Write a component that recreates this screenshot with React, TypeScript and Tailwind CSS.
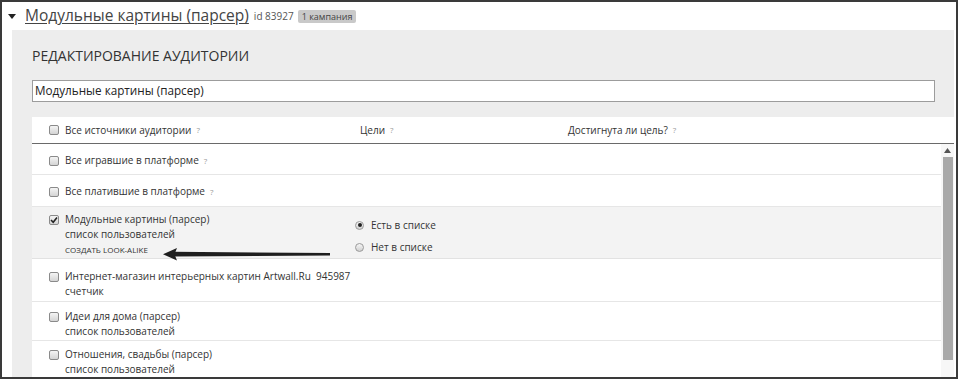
import React from "react";

const Q = () => <span className="ml-[5px] text-[8px] text-[#999]">?</span>;

const Box = ({ checked = false }: { checked?: boolean }) => (
  <span className="mr-[6px] inline-flex h-[10px] w-[10px] shrink-0 items-center justify-center rounded-[2px] border border-[#8a8a8a] bg-gradient-to-b from-[#f4f4f4] to-[#d4d4d4]">
    {checked && (
      <svg width="8" height="8" viewBox="0 0 8 8">
        <path d="M1 4 L3.2 6.2 L7 1.5" fill="none" stroke="#222" strokeWidth="1.6" />
      </svg>
    )}
  </span>
);

const Radio = ({ on = false }: { on?: boolean }) => (
  <span className="mr-[7px] inline-flex h-[9px] w-[9px] items-center justify-center rounded-full border border-[#9a9a9a] bg-gradient-to-b from-[#f6f6f6] to-[#d0d0d0]">
    {on && <span className="h-[4px] w-[4px] rounded-full bg-[#222]" />}
  </span>
);

type Row = { title: string; sub?: string; h: string; pt: string; q?: boolean };

const rows: Row[] = [
  { title: "Все игравшие в платформе", h: "h-[31px]", pt: "pt-[9px]", q: true },
  { title: "Все платившие в платформе", h: "h-[32px]", pt: "pt-[9px]", q: true },
];

const rest: Row[] = [
  { title: "Интернет-магазин интерьерных картин Artwall.Ru\u00a0\u00a0945987", sub: "счетчик", h: "h-[43px]", pt: "pt-[10px]" },
  { title: "Идеи для дома (парсер)", sub: "список пользователей", h: "h-[39px]", pt: "pt-[7px]" },
  { title: "Отношения, свадьбы (парсер)", sub: "список пользователей", h: "h-[40px]", pt: "pt-[6px]" },
];

export default function App() {
  return (
    <div
      className="h-[379px] w-[958px] overflow-hidden border-2 border-[#3a3a3a] bg-white text-[#333]"
      style={{ fontFamily: '"Open Sans", "Liberation Sans", sans-serif' }}
    >
      {/* header */}
      <div className="flex h-[28px] items-center pl-[6px]">
        <svg className="mr-[9px]" width="8" height="5" viewBox="0 0 8 5">
          <path d="M0 0 L8 0 L4 5 Z" fill="#222" />
        </svg>
        <span className="text-[15.5px] leading-none text-[#444] underline underline-offset-2">Модульные картины (парсер)</span>
        <span className="ml-[5px] text-[10px] text-[#555]">id 83927</span>
        <span className="ml-[4px] rounded-[2px] bg-[#c9c9c9] px-[4px] text-[9px] leading-[13px] text-[#444]">1 кампания</span>
      </div>

      {/* panel */}
      <div className="ml-[10px] mr-[2px] h-[349px] bg-[#ededed] pl-[20px]">
        <div className="pt-[16px] text-[14px] leading-[20px] text-[#333]">РЕДАКТИРОВАНИЕ АУДИТОРИИ</div>
        <div className="mt-[14px] mr-[19px] flex h-[22px] items-center border border-[#9c9c9c] bg-white pl-[2px] text-[11.7px] text-[#222]">
          Модульные картины (парсер)
        </div>

        {/* table head */}
        <div className="mt-[15px] flex h-[27px] items-center border-b border-[#6a6a6a] bg-white text-[10px]">
          <div className="flex w-[328px] items-center pl-[17px]">
            <Box />
            Все источники аудитории
            <Q />
          </div>
          <div className="flex w-[208px] items-center">
            Цели
            <Q />
          </div>
          <div className="flex items-center">
            Достигнута ли цель?
            <Q />
          </div>
        </div>

        {/* body */}
        <div className="flex h-[236px]">
          <div className="flex-1 text-[10px]">
            {rows.map((r) => (
              <div key={r.title} className={`${r.h} ${r.pt} border-b border-[#e6e6e6] bg-white pl-[17px]`}>
                <div className="flex items-center leading-[15px]">
                  <Box />
                  {r.title}
                  <Q />
                </div>
              </div>
            ))}

            <div className="relative flex h-[52px] border-b border-[#e2e2e2] bg-[#f3f3f3] pl-[17px] pt-[5px]">
              <div className="w-[306px]">
                <div className="flex items-center leading-[15px]">
                  <Box checked />
                  Модульные картины (парсер)
                </div>
                <div className="pl-[16px] leading-[14px]">список пользователей</div>
                <div className="pl-[16px] pt-[3px] text-[8px] leading-[12px] text-[#333]">СОЗДАТЬ LOOK-ALIKE</div>
              </div>
              <div className="pt-[6px]">
                <div className="flex items-center leading-[14px]">
                  <Radio on />
                  Есть в списке
                </div>
                <div className="mt-[8px] flex items-center leading-[14px]">
                  <Radio />
                  Нет в списке
                </div>
              </div>
              <svg className="absolute left-[131px] top-[40px]" width="170" height="14" viewBox="0 0 170 14">
                <path d="M10 4.8 L167 6 L167 8.4 L10 9.6 Z" fill="#1e1e1e" />
                <path d="M0 7.2 L14 1 L11.5 7.2 L14 13.4 Z" fill="#1e1e1e" />
              </svg>
            </div>

            {rest.map((r) => (
              <div key={r.title} className={`${r.h} ${r.pt} border-b border-[#e6e6e6] bg-white pl-[17px]`}>
                <div className="flex items-center leading-[15px]">
                  <Box />
                  {r.title}
                </div>
                <div className="pl-[16px] leading-[15px]">{r.sub}</div>
              </div>
            ))}
          </div>

          {/* scrollbar */}
          <div className="flex w-[13px] flex-col items-center bg-[#f7f7f7] pt-[4px]">
            <svg width="7" height="5" viewBox="0 0 7 5">
              <path d="M0 5 L3.5 0 L7 5 Z" fill="#555" />
            </svg>
            <div className="mt-[4px] h-[203px] w-[10px] bg-[#a9a9a9]" />
          </div>
        </div>
      </div>
    </div>
  );
}
